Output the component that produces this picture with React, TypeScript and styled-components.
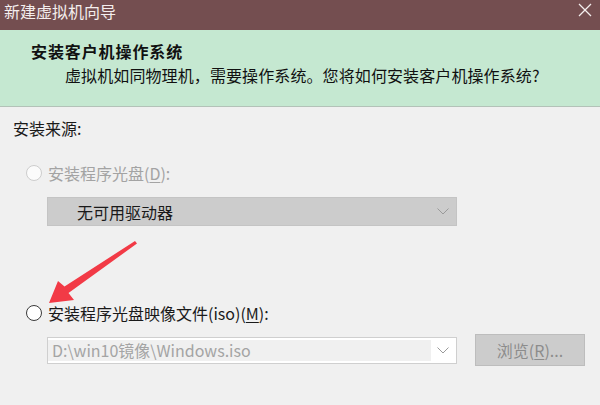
import React from "react";
import styled, { createGlobalStyle } from "styled-components";

const Global = createGlobalStyle`
  html, body { margin: 0; padding: 0; }
  body {
    width: 600px;
    height: 405px;
    overflow: hidden;
    background: #f0f0f0;
    font-family: "Microsoft YaHei", "Noto Sans CJK SC", sans-serif;
  }
`;

const Window = styled.div`
  position: relative;
  width: 600px;
  height: 405px;
  display: flex;
  flex-direction: column;
  background: #f0f0f0;
  overflow: hidden;
`;

const TitleBar = styled.div`
  height: 30px;
  flex: none;
  background: #744e50;
  display: flex;
  align-items: flex-start;
  justify-content: space-between;
  padding: 0 8px 0 4px;
  box-sizing: border-box;
`;

const TitleText = styled.div`
  color: #f4eeee;
  font-size: 16px;
  line-height: 22px;
`;

const CloseBox = styled.div`
  width: 14px;
  height: 14px;
  margin-top: 3px;
  display: flex;
`;

const Header = styled.div`
  height: 77px;
  flex: none;
  background: #c5e8d1;
  border-bottom: 1px solid #b3c2b8;
  box-sizing: border-box;
  padding: 9px 0 0 31px;
  color: #111;
`;

const HeaderTitle = styled.div`
  font-size: 16px;
  font-weight: 700;
  line-height: 24px;
  letter-spacing: 0.9px;
`;

const HeaderSub = styled.div`
  font-size: 16px;
  line-height: 24px;
  margin-left: 34px;
  letter-spacing: 0.1px;
`;

const Body = styled.div`
  flex: 1;
  display: flex;
  flex-direction: column;
  padding: 10px 0 0 13px;
`;

const Label = styled.div<{ $disabled?: boolean }>`
  font-size: 16px;
  line-height: 22px;
  color: ${(p) => (p.$disabled ? "#a3a3a3" : "#1a1a1a")};
`;

const RadioRow = styled.label<{ $top: number }>`
  display: flex;
  align-items: center;
  gap: 6px;
  margin-top: ${(p) => p.$top}px;
  margin-left: 13px;
  height: 22px;
`;

const RadioCircle = styled.span<{ $disabled?: boolean }>`
  width: 16px;
  height: 16px;
  box-sizing: border-box;
  border-radius: 50%;
  border: 1px solid ${(p) => (p.$disabled ? "#cdcdcd" : "#3a3a3a")};
  background: ${(p) => (p.$disabled ? "#fbfbfb" : "#ffffff")};
  flex: none;
`;

const Key = styled.span`
  text-decoration: underline;
  text-underline-offset: 2px;
`;

const FieldRow = styled.div<{ $top: number }>`
  display: flex;
  align-items: center;
  gap: 18px;
  margin-top: ${(p) => p.$top}px;
  margin-left: 34px;
`;

const DisabledSelect = styled.div`
  width: 410px;
  height: 29px;
  box-sizing: border-box;
  background: #cccccc;
  border: 1px solid #c4c4c4;
  display: flex;
  align-items: center;
  justify-content: space-between;
  padding: 0 7px 0 29px;
  font-size: 16px;
  color: #1a1a1a;
`;

const Combo = styled.div`
  width: 410px;
  height: 27px;
  box-sizing: border-box;
  background: #ffffff;
  border: 1px solid #cfcfcf;
  display: flex;
  align-items: stretch;
  padding: 2px 7px 2px 0;
`;

const ComboField = styled.div`
  flex: none;
  width: 383px;
  background: #f0f0f0;
  color: #a4a4a4;
  font-size: 16px;
  line-height: 21px;
  padding-left: 4px;
  box-sizing: border-box;
`;

const ComboArrow = styled.div`
  flex: 1;
  display: flex;
  align-items: center;
  justify-content: flex-end;
`;

const Button = styled.div`
  width: 110px;
  height: 32px;
  box-sizing: border-box;
  background: #cccccc;
  border: 1px solid #bdbdbd;
  color: #8c8c8c;
  font-size: 16px;
  display: flex;
  align-items: center;
  justify-content: center;
  margin-top: -1px;
`;

const ArrowOverlay = styled.svg`
  position: absolute;
  left: 0;
  top: 0;
  pointer-events: none;
`;

const Chevron = () => (
  <svg width="12" height="7" viewBox="0 0 12 7">
    <polyline points="0.5,0.5 6,6 11.5,0.5" fill="none" stroke="#9a9a9a" strokeWidth="1" />
  </svg>
);

export default function App() {
  return (
    <>
      <Global />
      <Window>
        <TitleBar>
          <TitleText>新建虚拟机向导</TitleText>
          <CloseBox>
            <svg width="14" height="14" viewBox="0 0 14 14">
              <line x1="1" y1="1" x2="13" y2="13" stroke="#f4eeee" strokeWidth="1.2" />
              <line x1="13" y1="1" x2="1" y2="13" stroke="#f4eeee" strokeWidth="1.2" />
            </svg>
          </CloseBox>
        </TitleBar>
        <Header>
          <HeaderTitle>安装客户机操作系统</HeaderTitle>
          <HeaderSub>虚拟机如同物理机，需要操作系统。您将如何安装客户机操作系统?</HeaderSub>
        </Header>
        <Body>
          <Label>安装来源:</Label>
          <RadioRow $top={23}>
            <RadioCircle $disabled />
            <Label $disabled>
              安装程序光盘(<Key>D</Key>):
            </Label>
          </RadioRow>
          <FieldRow $top={13}>
            <DisabledSelect>
              <span>无可用驱动器</span>
              <Chevron />
            </DisabledSelect>
          </FieldRow>
          <RadioRow $top={76}>
            <RadioCircle />
            <Label>
              安装程序光盘映像文件(iso)(<Key>M</Key>):
            </Label>
          </RadioRow>
          <FieldRow $top={11}>
            <Combo>
              <ComboField>D:\win10镜像\Windows.iso</ComboField>
              <ComboArrow>
                <Chevron />
              </ComboArrow>
            </Combo>
            <Button>
              浏览(<Key>R</Key>)...
            </Button>
          </FieldRow>
        </Body>
        <ArrowOverlay width="600" height="405" viewBox="0 0 600 405">
          <polygon
            points="49,303 58,281 64.5,286.5 135,241 137,243.5 68.5,293 74,300"
            fill="#f23a46"
          />
        </ArrowOverlay>
      </Window>
    </>
  );
}
